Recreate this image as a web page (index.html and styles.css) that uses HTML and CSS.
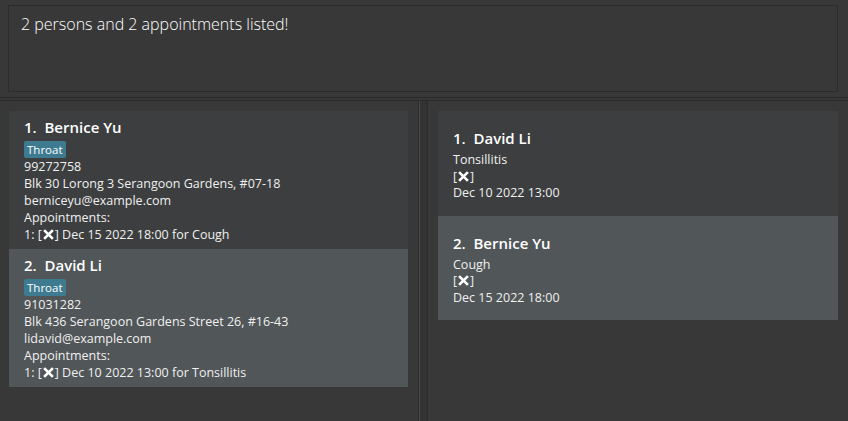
FILE: index.html
```html
<!DOCTYPE html>
<html lang="en">
<head>
    <meta charset="UTF-8">
    <meta name="viewport" content="width=device-width, initial-scale=1.0">
    <title>Appointment Book</title>
    <link rel="stylesheet" href="styles.css">
</head>
<body>
    <div class="app">
        <div class="result">2 persons and 2 appointments listed!</div>
        <div class="separator"></div>
        <div class="panes">
            <div class="pane left">
                <div class="card">
                    <div class="name">1.&nbsp;&nbsp;Bernice Yu</div>
                    <div class="tags"><span class="tag">Throat</span></div>
                    <div class="line">99272758</div>
                    <div class="line">Blk 30 Lorong 3 Serangoon Gardens, #07-18</div>
                    <div class="line">berniceyu@example.com</div>
                    <div class="line">Appointments:</div>
                    <div class="line">1: [<svg class="x" viewBox="0 0 10 10"><path d="M1 1L9 9M9 1L1 9"/></svg>] Dec 15 2022 18:00 for Cough</div>
                </div>
                <div class="card odd">
                    <div class="name">2.&nbsp;&nbsp;David Li</div>
                    <div class="tags"><span class="tag">Throat</span></div>
                    <div class="line">91031282</div>
                    <div class="line">Blk 436 Serangoon Gardens Street 26, #16-43</div>
                    <div class="line">lidavid@example.com</div>
                    <div class="line">Appointments:</div>
                    <div class="line">1: [<svg class="x" viewBox="0 0 10 10"><path d="M1 1L9 9M9 1L1 9"/></svg>] Dec 10 2022 13:00 for Tonsillitis</div>
                </div>
            </div>
            <div class="divider"></div>
            <div class="pane right">
                <div class="card appt">
                    <div class="name">1.&nbsp;&nbsp;David Li</div>
                    <div class="line">Tonsillitis</div>
                    <div class="line">[<svg class="x" viewBox="0 0 10 10"><path d="M1 1L9 9M9 1L1 9"/></svg>]</div>
                    <div class="line">Dec 10 2022 13:00</div>
                </div>
                <div class="card appt odd">
                    <div class="name">2.&nbsp;&nbsp;Bernice Yu</div>
                    <div class="line">Cough</div>
                    <div class="line">[<svg class="x" viewBox="0 0 10 10"><path d="M1 1L9 9M9 1L1 9"/></svg>]</div>
                    <div class="line">Dec 15 2022 18:00</div>
                </div>
            </div>
        </div>
    </div>
</body>
</html>
```

FILE: styles.css
```css
body {
    margin: 0;
    background-color: #383838;
    font-family: "Open Sans", "Noto Sans", sans-serif;
    color: #ffffff;
    overflow: hidden;
}
.app {
    display: flex;
    flex-direction: column;
    height: 421px;
}
.result {
    margin: 5px 10px 0 8px;
    height: 73px;
    padding: 7px 12px 5px 12px;
    border: 1px solid #2c2c2c;
    font-size: 16px;
    font-weight: 300;
    line-height: 23px;
    color: #ffffff;
}
.separator {
    margin-top: 5px;
    height: 2px;
    border-top: 1px solid #2a2a2a;
    border-bottom: 1px solid #2a2a2a;
}
.panes {
    display: flex;
    flex: 1;
    min-height: 0;
}
.pane {
    display: flex;
    flex-direction: column;
    padding-top: 10px;
}
.left {
    width: 399px;
    padding-left: 9px;
    padding-right: 10px;
}
.right {
    flex: 1;
    padding-left: 10px;
    padding-right: 10px;
    border-left: 1px solid #2c2c2c;
}
.divider {
    width: 8px;
    background-color: #333333;
    border-left: 1px solid #2c2c2c;
    box-shadow: inset 1px 0 0 #4a4a4a;
}
.card {
    background-color: #3c3e3f;
    padding: 7px 15px 6px 15px;
}
.card.odd {
    background-color: #515658;
}
.name {
    font-size: 15px;
    font-weight: 600;
    line-height: 19px;
    margin-bottom: 4px;
}
.tags {
    display: flex;
    height: 17px;
}
.tag {
    background-color: #3e7b91;
    color: #ffffff;
    font-size: 11.5px;
    line-height: 17px;
    padding: 0 3px;
    border-radius: 2px;
}
.line {
    font-size: 12.5px;
    line-height: 17px;
    color: #f0f0f0;
    white-space: nowrap;
}
.x {
    width: 11px;
    height: 11px;
    margin: 0 1px;
    vertical-align: -1px;
    stroke: #ffffff;
    stroke-width: 2.4;
    fill: none;
}
.card.appt {
    padding: 18px 15px 14px 15px;
}
.appt .line {
    line-height: 16.5px;
}
```
